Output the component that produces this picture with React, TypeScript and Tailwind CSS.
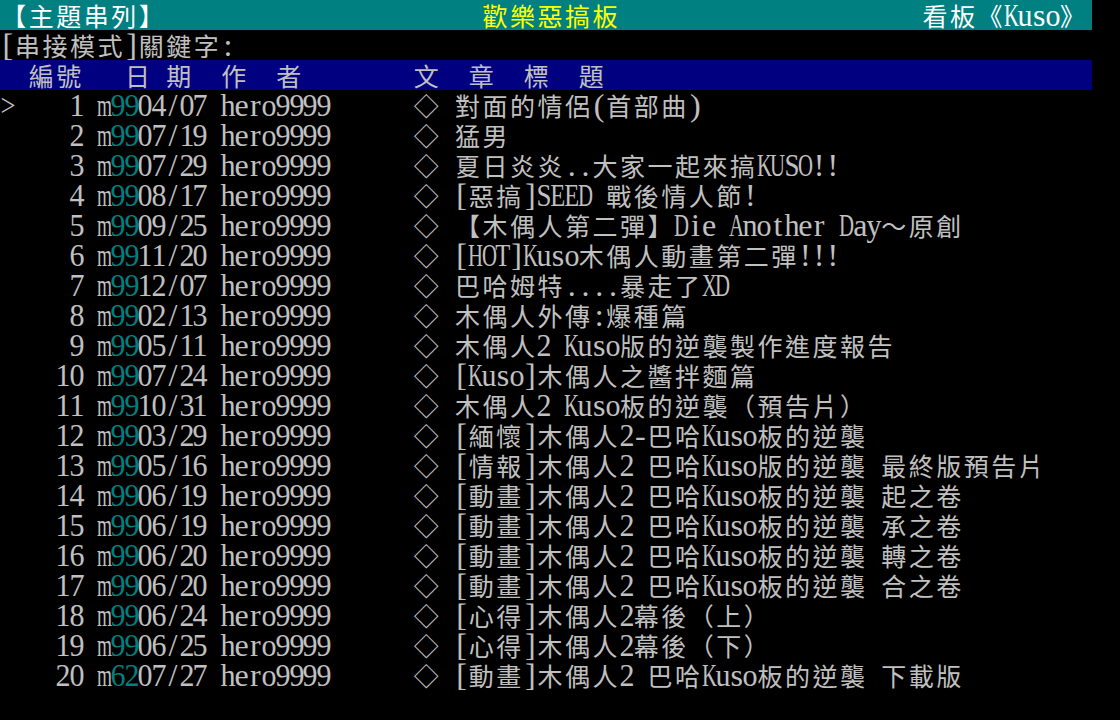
// 看板文章列表 — BBS 終端畫面重現（80 欄 × 24 列，每欄約 13.75px，每列 30px）
import type { ReactNode } from 'react'

type Seg = [string, keyof typeof COLOR]

const COLOR = {
  g: 'text-[#c0c0c0]',
  w: 'text-[#ffffff]',
  y: 'text-[#ffff00]',
  c: 'text-[#008080]',
}

// Times / Liberation Serif advance widths (1/1000 em) para angostar cada letra a su celda
const TIMES: Record<string, number> = {
  ' ': 250, '!': 333, '(': 333, ')': 333, '-': 333, '.': 250, '/': 278, ':': 278, '>': 564, '[': 333, ']': 333,
  '0': 500, '1': 500, '2': 500, '3': 500, '4': 500, '5': 500, '6': 500, '7': 500, '8': 500, '9': 500,
  a: 444, b: 500, c: 444, d: 500, e: 444, f: 333, g: 500, h: 500, i: 278, j: 278, k: 500, l: 278, m: 778,
  n: 500, o: 500, p: 500, q: 500, r: 333, s: 389, t: 278, u: 500, v: 500, w: 722, x: 500, y: 500, z: 444,
  A: 722, B: 667, C: 667, D: 722, E: 611, F: 556, G: 722, H: 722, I: 333, J: 389, K: 722, L: 611, M: 889,
  N: 722, O: 722, P: 556, Q: 722, R: 667, S: 556, T: 611, U: 722, V: 722, W: 944, X: 722, Y: 722, Z: 611,
}

const posts: [string, string, string][] = [
  ['99', '04/07', '對面的情侶(首部曲)'],
  ['99', '07/19', '猛男'],
  ['99', '07/29', '夏日炎炎..大家一起來搞KUSO!!'],
  ['99', '08/17', '[惡搞]SEED 戰後情人節!'],
  ['99', '09/25', '【木偶人第二彈】Die Another Day～原創'],
  ['99', '11/20', '[HOT]Kuso木偶人動畫第二彈!!!'],
  ['99', '12/07', '巴哈姆特....暴走了XD'],
  ['99', '02/13', '木偶人外傳:爆種篇'],
  ['99', '05/11', '木偶人2 Kuso版的逆襲製作進度報告'],
  ['99', '07/24', '[Kuso]木偶人之醬拌麵篇'],
  ['99', '10/31', '木偶人2 Kuso板的逆襲（預告片）'],
  ['99', '03/29', '[緬懷]木偶人2-巴哈Kuso板的逆襲'],
  ['99', '05/16', '[情報]木偶人2 巴哈Kuso版的逆襲 最終版預告片'],
  ['99', '06/19', '[動畫]木偶人2 巴哈Kuso板的逆襲 起之卷'],
  ['99', '06/19', '[動畫]木偶人2 巴哈Kuso板的逆襲 承之卷'],
  ['99', '06/20', '[動畫]木偶人2 巴哈Kuso板的逆襲 轉之卷'],
  ['99', '06/20', '[動畫]木偶人2 巴哈Kuso板的逆襲 合之卷'],
  ['99', '06/24', '[心得]木偶人2幕後（上）'],
  ['99', '06/25', '[心得]木偶人2幕後（下）'],
  ['62', '07/27', '[動畫]木偶人2 巴哈Kuso板的逆襲 下載版'],
]

const sp = (n: number) => ' '.repeat(n)

function Cell({ ch, color }: { ch: string; color: string }) {
  // Big5：非 ASCII 一律佔兩欄
  if (ch.charCodeAt(0) > 0x7f) {
    return (
      <span className={`flex h-[30px] w-[27.5px] shrink-0 justify-center font-['Noto_Sans_CJK_TC',sans-serif] text-[25px] leading-[30px] ${color}`}>
        {ch}
      </span>
    )
  }
  if (ch === ' ') return <span className="h-[30px] w-[13.75px] shrink-0" />
  const adv = ((TIMES[ch] ?? 500) * 32) / 1000
  const s = Math.min(1, 15 / adv)
  return (
    <span className={`flex h-[30px] w-[13.75px] shrink-0 justify-center pl-[2px] font-['Liberation_Serif',serif] text-[32px] leading-[30px] ${color}`}>
      <span className="shrink-0" style={s < 1 ? { transform: `scaleX(${s})` } : undefined}>{ch}</span>
    </span>
  )
}

function Row({ segs, className = '' }: { segs: Seg[]; className?: string }) {
  const cells: ReactNode[] = []
  segs.forEach(([text, c], si) => {
    Array.from(text).forEach((ch, i) => cells.push(<Cell key={`${si}-${i}`} ch={ch} color={COLOR[c]} />))
  })
  return <div className={`flex h-[30px] overflow-visible ${className}`}>{cells}</div>
}

export default function App() {
  return (
    <div className="h-[720px] w-[1120px] overflow-hidden bg-black">
      <Row
        className="w-[1092px] overflow-hidden bg-[#008080]"
        segs={[['【主題串列】' + sp(23), 'w'], ['歡樂惡搞板', 'y'], [sp(22) + '看板《Kuso》', 'w']]}
      />
      <Row segs={[['[串接模式]關鍵字:', 'g']]} />
      <Row
        className="w-[1092px] bg-[#000080]"
        segs={[['  編號   日 期  作  者' + sp(8) + '文  章  標  題', 'g']]}
      />
      {posts.map(([mk, date, title], i) => (
        <Row
          key={i}
          segs={[
            [(i === 0 ? '>' : ' ') + String(i + 1).padStart(5) + ' m', 'g'],
            [mk, 'c'],
            [date + ' hero9999' + sp(6) + '◇ ' + title, 'g'],
          ]}
        />
      ))}
    </div>
  )
}
